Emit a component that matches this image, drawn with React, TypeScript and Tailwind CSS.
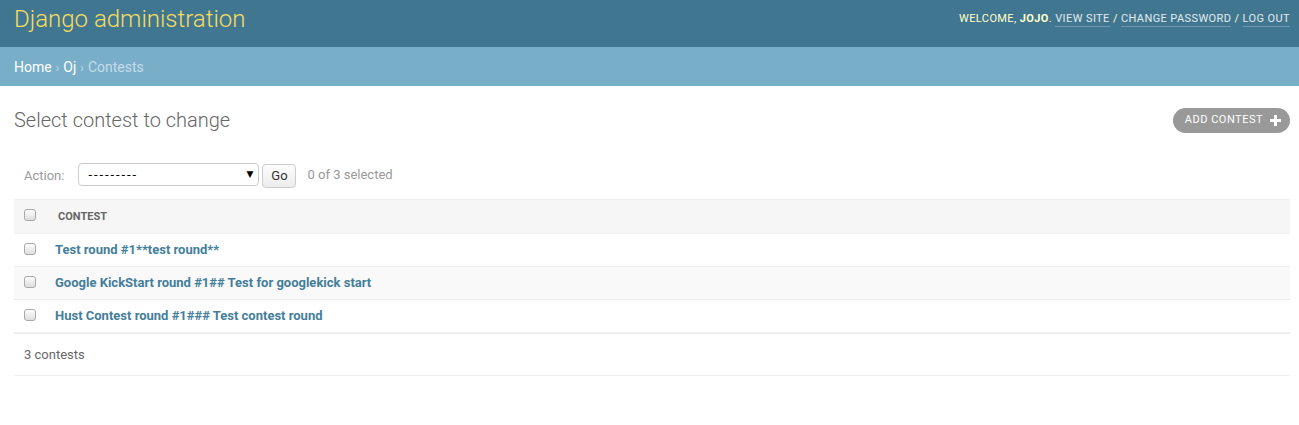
import React from "react";

const Check = () => (
  <span className="inline-block w-[12px] h-[12px] rounded-[3px] border border-[#a9a9a9] bg-gradient-to-b from-[#fdfdfd] to-[#dedede] shadow-[inset_0_1px_0_#fff]" />
);

const rows = [
  "Test round #1**test round**",
  "Google KickStart round #1## Test for googlekick start",
  "Hust Contest round #1### Test contest round",
];

export default function App() {
  return (
    <div className="w-[1299px] h-[425px] bg-white font-['Roboto','Lucida_Grande','DejaVu_Sans',sans-serif] text-[13px] text-[#333]">
      {/* Header */}
      <div className="h-[47px] bg-[#417690] flex items-center justify-between pl-[14px] pr-[9px]">
        <div className="text-[24px] font-light text-[#f5dd5d] leading-none -mt-[9px]">Django administration</div>
        <div className="text-[11px] uppercase tracking-[0.4px] text-[#ffc] -mt-[11px] leading-none">
          Welcome, <strong className="font-bold">jojo</strong>.{" "}
          <a className="text-white/85 border-b border-white/25 pb-[1px]">View site</a> /{" "}
          <a className="text-white/85 border-b border-white/25 pb-[1px]">Change password</a> /{" "}
          <a className="text-white/85 border-b border-white/25 pb-[1px]">Log out</a>
        </div>
      </div>
      {/* Breadcrumbs */}
      <div className="h-[39px] bg-[#79aec8] flex items-center pl-[14px] pt-[2px] text-[14px] text-[#c4dce8]">
        <a className="text-white">Home</a>
        <span className="mx-[4px] text-[12px]">›</span>
        <a className="text-white">Oj</a>
        <span className="mx-[4px] text-[12px]">›</span>
        <span>Contests</span>
      </div>
      {/* Content */}
      <div className="pl-[14px] pr-[9px]">
        <div className="flex items-center justify-between h-[68px]">
          <h1 className="text-[20px] font-light text-[#666]">Select contest to change</h1>
          <a className="flex items-center h-[25px] rounded-full bg-[#999] pl-[12px] pr-[9px] text-[11px] text-white uppercase tracking-[0.5px] gap-[7px]">
            Add contest
            <svg width="11" height="11" viewBox="0 0 11 11">
              <rect x="4" y="0" width="3" height="11" fill="white" />
              <rect x="0" y="4" width="11" height="3" fill="white" />
            </svg>
          </a>
        </div>
        {/* Actions */}
        <div className="h-[45px] flex items-start pl-[10px] pt-[9px]">
          <span className="text-[#999] mr-[14px] mt-[3px]">Action:</span>
          <div className="w-[181px] h-[23px] border border-[#ccc] rounded-[4px] flex items-center justify-between pl-[9px] pr-[5px] bg-white">
            <span className="text-black text-[13px] tracking-[1.9px]">---------</span>
            <span className="text-black text-[9px]">▼</span>
          </div>
          <div className="ml-[3px] w-[34px] h-[24px] mt-[1px] border border-[#ccc] rounded-[4px] bg-gradient-to-b from-[#fdfdfd] to-[#ececec] flex items-center justify-center text-[13px] text-[#333]">
            Go
          </div>
          <span className="ml-[11px] text-[#999] mt-[2px]">0 of 3 selected</span>
        </div>
        {/* Table */}
        <div className="border-t border-[#eee]">
          <div className="h-[34px] bg-[#f6f6f6] border-b border-[#eee] flex items-center">
            <div className="w-[41px] pl-[10px] flex items-center -mt-[3px]"><Check /></div>
            <div className="pl-[3px] pt-[2px] text-[11px] font-bold uppercase text-[#666]">Contest</div>
          </div>
          {rows.map((r, i) => (
            <div
              key={i}
              className={`h-[33px] border-b border-[#eee] flex items-center ${i === 1 ? "bg-[#f9f9f9]" : "bg-white"}`}
            >
              <div className="w-[41px] pl-[10px] flex items-center -mt-[3px]"><Check /></div>
              <a className="text-[13px] font-bold text-[#447e9b]">{r}</a>
            </div>
          ))}
        </div>
        <div className="h-[43px] border-t border-b border-[#eee] flex items-center pl-[10px] text-[#666]">
          3 contests
        </div>
      </div>
    </div>
  );
}
